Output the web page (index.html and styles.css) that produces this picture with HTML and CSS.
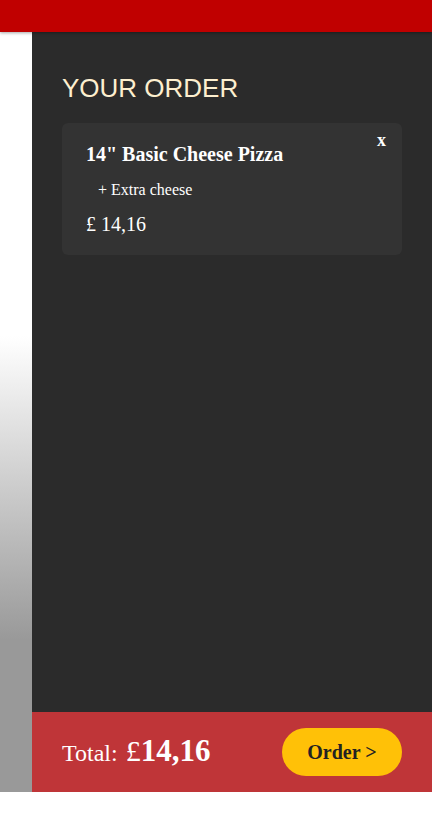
FILE: index.html
```html
<!DOCTYPE html>
<html>
<head>
<meta charset="utf-8">
<link rel="stylesheet" href="styles.css">
</head>
<body>
<header class="topbar"></header>
<div class="main">
  <div class="side"></div>
  <aside class="panel">
    <div class="panel-body">
      <h2 class="title">YOUR ORDER</h2>
      <div class="card">
        <button class="remove">x</button>
        <div class="item-name">14" Basic Cheese Pizza</div>
        <div class="extra">+ Extra cheese</div>
        <div class="price">£ 14,16</div>
      </div>
    </div>
    <footer class="footer">
      <div class="total">Total: <span class="cur">£</span><b class="amount">14,16</b></div>
      <button class="order">Order &gt;</button>
    </footer>
  </aside>
</div>
</body>
</html>
```
FILE: styles.css
```css
html, body { margin: 0; padding: 0; }
body {
  width: 432px;
  height: 816px;
  background: #fff;
  font-family: "Liberation Serif", "Times New Roman", serif;
  position: relative;
}
.topbar {
  height: 32px;
  background: #c00000;
  position: relative;
  z-index: 2;
  box-shadow: 0 1px 3px rgba(0,0,0,0.35);
}
.main {
  display: flex;
  height: 760px;
}
.side {
  width: 32px;
  background: linear-gradient(to bottom, #fff 40%, #999 80%, #999 100%);
}
.panel {
  width: 400px;
  background: #2b2b2b;
  display: flex;
  flex-direction: column;
}
.panel-body {
  flex: 1;
  padding: 0 30px;
}
.title {
  margin: 42px 0 0 0;
  font-family: "Liberation Sans", Arial, sans-serif;
  font-weight: normal;
  font-size: 26px;
  line-height: 28px;
  color: #fdefcf;
}
.card {
  margin-top: 21px;
  background: #333;
  border-radius: 6px;
  height: 132px;
  box-sizing: border-box;
  padding: 20px 24px 0 24px;
  position: relative;
  color: #fff;
}
.remove {
  position: absolute;
  top: 7px;
  right: 16px;
  background: none;
  border: 0;
  padding: 0;
  color: #fff;
  font-family: "Liberation Serif", serif;
  font-weight: bold;
  font-size: 18px;
  line-height: 20px;
}
.item-name {
  font-weight: bold;
  font-size: 20px;
  line-height: 22px;
}
.extra {
  margin-top: 16px;
  padding-left: 12px;
  font-size: 16px;
  line-height: 18px;
}
.price {
  margin-top: 14px;
  font-size: 20px;
  line-height: 22px;
}
.footer {
  height: 80px;
  background: #bf3538;
  display: flex;
  align-items: center;
  justify-content: space-between;
  padding: 0 30px;
  color: #fff;
}
.total {
  font-size: 24px;
  line-height: 30px;
}
.cur {
  font-size: 30px;
  margin-left: 2px;
}
.amount {
  font-size: 31px;
}
.order {
  width: 120px;
  height: 48px;
  border: 0;
  border-radius: 24px;
  background: #ffc107;
  color: #222;
  font-family: "Liberation Serif", serif;
  font-weight: bold;
  font-size: 20px;
}
```
